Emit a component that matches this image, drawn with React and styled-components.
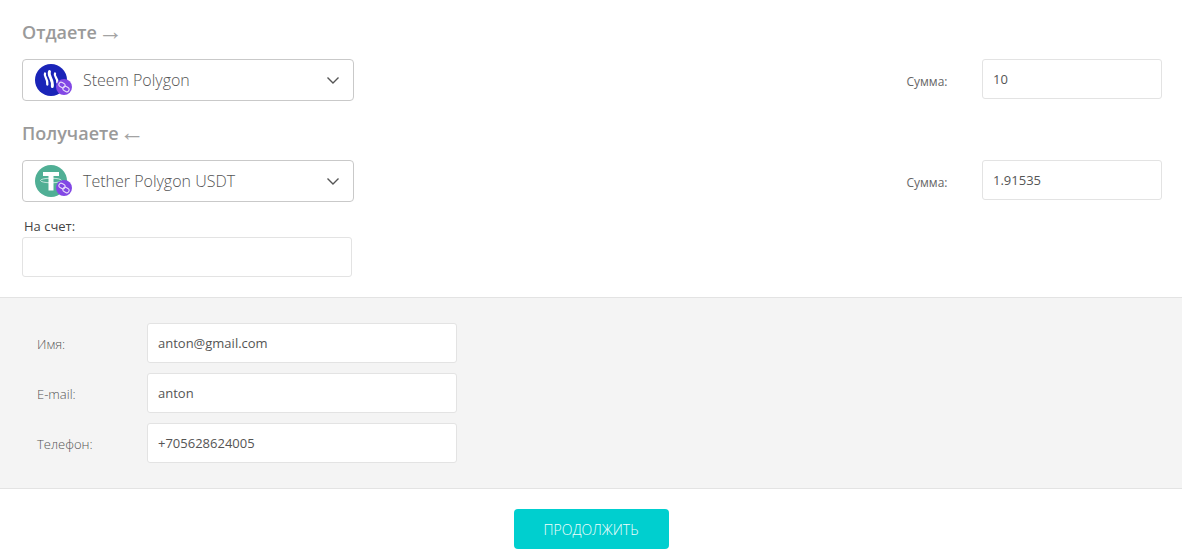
import React from 'react';
import styled, { createGlobalStyle } from 'styled-components';

const GlobalStyle = createGlobalStyle`
  html, body {
    margin: 0;
    padding: 0;
    background: #fff;
    font-family: "Open Sans", "Noto Sans", sans-serif;
  }
  * {
    box-sizing: border-box;
  }
`;

const Page = styled.div`
  width: 1182px;
  height: 557px;
  overflow: hidden;
`;

const Top = styled.div`
  padding: 21px 20px 20px 22px;
`;

const Heading = styled.div`
  display: flex;
  align-items: center;
  gap: 1px;
  height: 22px;
  line-height: 22px;
  font-size: 18px;
  font-weight: 600;
  color: #9a9a9a;
  margin-bottom: 16px;
`;

const Arrow = styled.span`
  font-family: "Liberation Serif", serif;
  font-size: 25px;
  line-height: 22px;
  font-weight: 400;
  color: #a3a3a3;
`;

const Row = styled.div`
  display: flex;
  align-items: flex-start;
  justify-content: space-between;
  margin-bottom: 21px;
`;

const Select = styled.div`
  display: flex;
  align-items: center;
  width: 332px;
  height: 42px;
  padding: 0 13px 0 12px;
  border: 1px solid #c9c9c9;
  border-radius: 4px;
  background: #fff;
`;

const CoinWrap = styled.div`
  position: relative;
  width: 36px;
  height: 36px;
  flex: none;
`;

const Badge = styled.div`
  position: absolute;
  right: -1px;
  bottom: 3px;
  width: 16px;
  height: 16px;
  border-radius: 50%;
  background: #8247e5;
  display: flex;
  align-items: center;
  justify-content: center;
`;

const SelectText = styled.div`
  flex: 1;
  margin-left: 12px;
  font-size: 16px;
  font-weight: 300;
  color: #555;
  white-space: nowrap;
`;

const Amount = styled.div`
  display: flex;
  align-items: center;
  gap: 34.5px;
`;

const AmountLabel = styled.div`
  font-size: 12px;
  color: #666;
  padding-top: 4px;
`;

const Field = styled.div`
  display: flex;
  align-items: center;
  width: ${p => p.$width}px;
  height: 40px;
  padding: 0 10px;
  border: 1px solid #e3e3e3;
  border-radius: 3px;
  background: #fff;
  font-size: 13px;
  color: #555;
`;

const AccountLabel = styled.div`
  margin: -6px 0 2px 2px;
  height: 18px;
  line-height: 18px;
  font-size: 13px;
  color: #444;
`;

const Contacts = styled.div`
  height: 192px;
  padding: 25px 37px;
  display: flex;
  flex-direction: column;
  gap: 10px;
  background: #f4f4f4;
  border-top: 1px solid #e3e3e3;
  border-bottom: 1px solid #e3e3e3;
`;

const ContactRow = styled.div`
  display: flex;
  align-items: center;
`;

const ContactLabel = styled.div`
  width: 110px;
  font-size: 13px;
  font-weight: 300;
  color: #555;
  padding-top: 2px;
`;

const Footer = styled.div`
  display: flex;
  justify-content: center;
  padding-top: 20px;
`;

const Button = styled.button`
  width: 155px;
  height: 40px;
  border: none;
  border-radius: 4px;
  background: #00cfcf;
  color: #f2fdfd;
  font-family: inherit;
  font-size: 14px;
  font-weight: 300;
`;

const Link = () => (
  <svg width="12" height="12" viewBox="0 0 12 12" fill="none" stroke="#fff" strokeWidth="1.1" opacity="0.8">
    <rect x="0.8" y="1.8" width="6.4" height="4.4" rx="2.2" transform="rotate(30 4 4)" />
    <rect x="4.8" y="5.8" width="6.4" height="4.4" rx="2.2" transform="rotate(30 8 8)" />
  </svg>
);

const Steem = () => (
  <svg width="32" height="32" viewBox="0 0 32 32" style={{ display: 'block', marginTop: 2 }}>
    <circle cx="16" cy="16" r="16" fill="#1a24b8" />
    <g fill="none" stroke="#fff" strokeLinecap="round">
      <path d="M10 9.500C8.500 12.500 13.500 15 12.300 20.500" strokeWidth="2.300" />
      <path d="M14.500 7.500C12.500 12 18.500 15 17.300 22.500" strokeWidth="2.900" />
      <path d="M20 9.500C18.500 12.500 23.500 14.500 22.300 18.500" strokeWidth="2.300" />
    </g>
  </svg>
);

const Tether = () => (
  <svg width="32" height="32" viewBox="0 0 32 32" style={{ display: 'block', marginTop: 2 }}>
    <circle cx="16" cy="16" r="16" fill="#50af95" />
    <path d="M8 7h16v4h-5.500v3h-5v-3H8z M13.500 14h5v11.500h-5z" fill="#fff" />
    <ellipse cx="16" cy="15.500" rx="10.500" ry="2.300" fill="none" stroke="#fff" strokeWidth="0.9" opacity="0.75" />
  </svg>
);

const Coin = ({ children }) => (
  <CoinWrap>
    {children}
    <Badge><Link /></Badge>
  </CoinWrap>
);

const Chevron = () => (
  <svg width="14" height="14" viewBox="0 0 14 14" fill="none" stroke="#555" strokeWidth="1.400">
    <path d="M1.500 4.500L7 10l5.500-5.500" />
  </svg>
);

const contacts = [
  ['Имя:', 'anton@gmail.com'],
  ['E-mail:', 'anton'],
  ['Телефон:', '+705628624005'],
];

export default function App() {
  return (
    <Page>
      <GlobalStyle />
      <Top>
        <Heading>Отдаете<Arrow>→</Arrow></Heading>
        <Row>
          <Select>
            <Coin><Steem /></Coin>
            <SelectText>Steem Polygon</SelectText>
            <Chevron />
          </Select>
          <Amount>
            <AmountLabel>Сумма:</AmountLabel>
            <Field $width={180}>10</Field>
          </Amount>
        </Row>
        <Heading>Получаете<Arrow>←</Arrow></Heading>
        <Row>
          <Select>
            <Coin><Tether /></Coin>
            <SelectText>Tether Polygon USDT</SelectText>
            <Chevron />
          </Select>
          <Amount>
            <AmountLabel>Сумма:</AmountLabel>
            <Field $width={180}>1.91535</Field>
          </Amount>
        </Row>
        <AccountLabel>На счет:</AccountLabel>
        <Field $width={330} />
      </Top>
      <Contacts>
        {contacts.map(([label, value]) => (
          <ContactRow key={label}>
            <ContactLabel>{label}</ContactLabel>
            <Field $width={310}>{value}</Field>
          </ContactRow>
        ))}
      </Contacts>
      <Footer>
        <Button>ПРОДОЛЖИТЬ</Button>
      </Footer>
    </Page>
  );
}
